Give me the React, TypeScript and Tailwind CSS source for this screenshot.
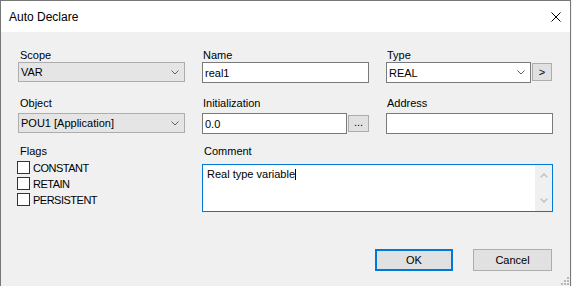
import React from "react";

const Chevron = ({ color = "#606060" }: { color?: string }) => (
  <svg width="8" height="5" viewBox="0 0 8 5" className="block">
    <path d="M0.5 0.5 L4 4 L7.5 0.5" fill="none" stroke={color} strokeWidth="1" />
  </svg>
);

const ComboGrey = ({ text }: { text: string }) => (
  <div className="h-[20px] w-[167px] bg-[#e5e5e5] border border-[#adadad] flex items-center justify-between pl-[2px] pr-[5px]">
    <span className="leading-[16px]">{text}</span>
    <Chevron />
  </div>
);

const Input = ({ text, w }: { text: string; w: string }) => (
  <div className={`h-[21px] ${w} bg-white border border-[#7a7a7a] flex items-center pl-[2px]`}>
    <span className="leading-[16px]">{text}</span>
  </div>
);

const Check = ({ label }: { label: string }) => (
  <div className="flex items-center h-[13px] ml-[-1px]">
    <div className="w-[13px] h-[13px] bg-white border border-[#333333]" />
    <span className="ml-[3px] leading-[14px] tracking-[-0.5px]">{label}</span>
  </div>
);

export default function App() {
  return (
    <div className="w-[572px] h-[286px] bg-[#f4f4f4] overflow-hidden font-['Liberation_Sans',Arial,sans-serif] text-[11px] text-black relative">
      <div className="w-[571px] h-[286px] border-l border-t border-r border-[#777777] bg-[#f0f0f0] flex flex-col">
        {/* Title bar */}
        <div className="h-[31px] bg-white flex items-center justify-between pl-[8px] pr-[9px] shrink-0">
          <span className="leading-[16px] text-[12px]">Auto Declare</span>
          <svg width="10" height="10" viewBox="0 0 10 10" className="block">
            <path d="M0.5 0.5 L9.5 9.5 M9.5 0.5 L0.5 9.5" stroke="#000" strokeWidth="1" />
          </svg>
        </div>

        {/* Content */}
        <div className="pl-[17px] pr-[18px] pt-[16px] flex flex-col">
          {/* Row 1 */}
          <div className="grid grid-cols-[167px_167px_167px] gap-x-[17px]">
            <div className="flex flex-col">
              <span className="leading-[14px] h-[14px] pl-[2px]">Scope</span>
              <ComboGrey text="VAR" />
            </div>
            <div className="flex flex-col">
              <span className="leading-[14px] h-[14px] pl-px">Name</span>
              <Input text="real1" w="w-[167px]" />
            </div>
            <div className="flex flex-col">
              <span className="leading-[14px] h-[14px] pl-px">Type</span>
              <div className="flex items-start">
                <div className="h-[21px] w-[145px] bg-white border border-[#7a7a7a] flex items-center justify-between pl-[2px] pr-[5px]">
                  <span className="leading-[16px]">REAL</span>
                  <Chevron />
                </div>
                <div className="ml-px mt-px h-[18px] w-[20px] bg-[#e1e1e1] border border-[#adadad] flex items-center justify-center leading-[14px]">
                  &gt;
                </div>
              </div>
            </div>
          </div>

          {/* Row 2 */}
          <div className="grid grid-cols-[167px_167px_167px] gap-x-[17px] mt-[13px]">
            <div className="flex flex-col">
              <span className="leading-[14px] h-[14px] pl-[2px]">Object</span>
              <div className="mt-[3px]">
                <ComboGrey text="POU1 [Application]" />
              </div>
            </div>
            <div className="flex flex-col">
              <span className="leading-[14px] h-[14px] pl-px">Initialization</span>
              <div className="mt-[3px] flex items-start">
                <Input text="0.0" w="w-[145px]" />
                <div className="ml-px mt-[2px] h-[17px] w-[21px] bg-[#e1e1e1] border border-[#adadad] flex items-center justify-center leading-[12px] pb-[3px]">
                  ...
                </div>
              </div>
            </div>
            <div className="flex flex-col">
              <span className="leading-[14px] h-[14px] pl-px">Address</span>
              <div className="mt-[3px]">
                <Input text="" w="w-[167px]" />
              </div>
            </div>
          </div>

          {/* Row 3 */}
          <div className="grid grid-cols-[167px_351px] gap-x-[17px] mt-[10px]">
            <div className="flex flex-col">
              <span className="leading-[14px] h-[14px] pl-[2px]">Flags</span>
              <div className="mt-[3px] flex flex-col gap-[3px]">
                <Check label="CONSTANT" />
                <Check label="RETAIN" />
                <Check label="PERSISTENT" />
              </div>
            </div>
            <div className="flex flex-col">
              <span className="leading-[14px] h-[14px] pl-[2px]">Comment</span>
              <div className="mt-[6px] h-[48px] w-[351px] bg-white border border-[#0078d7] flex">
                <div className="flex-1 pl-[4px] pt-[1px] flex items-start">
                  <span className="leading-[16px]">Real type variable</span>
                  <span className="w-px h-[11px] bg-black mt-[3px]" />
                </div>
                <div className="w-[17px] bg-[#f0f0f0] flex flex-col items-center justify-between py-[8px]">
                  <svg width="8" height="5" viewBox="0 0 8 5" className="block">
                    <path d="M0.7 4.3 L4 1 L7.3 4.3" fill="none" stroke="#c2c2c2" strokeWidth="1.6" />
                  </svg>
                  <svg width="8" height="5" viewBox="0 0 8 5" className="block">
                    <path d="M0.7 0.7 L4 4 L7.3 0.7" fill="none" stroke="#c2c2c2" strokeWidth="1.6" />
                  </svg>
                </div>
              </div>
            </div>
          </div>

          {/* Buttons */}
          <div className="flex justify-end gap-[20px] mt-[37px]">
            <div className="w-[78px] h-[22px] bg-[#e1e1e1] border-2 border-[#0078d7] flex items-center justify-center leading-[16px]">
              OK
            </div>
            <div className="w-[79px] h-[22px] bg-[#e1e1e1] border border-[#adadad] flex items-center justify-center leading-[16px]">
              Cancel
            </div>
          </div>
        </div>
      </div>

      {/* resize grip */}
      <svg width="9" height="9" viewBox="0 0 9 9" className="absolute left-[561px] top-[277px]">
        <rect x="6" y="0" width="2" height="2" fill="#b8b8b8" />
        <rect x="3" y="3" width="2" height="2" fill="#b8b8b8" />
        <rect x="6" y="3" width="2" height="2" fill="#b8b8b8" />
        <rect x="0" y="6" width="2" height="2" fill="#b8b8b8" />
        <rect x="3" y="6" width="2" height="2" fill="#b8b8b8" />
        <rect x="6" y="6" width="2" height="2" fill="#b8b8b8" />
      </svg>
    </div>
  );
}
